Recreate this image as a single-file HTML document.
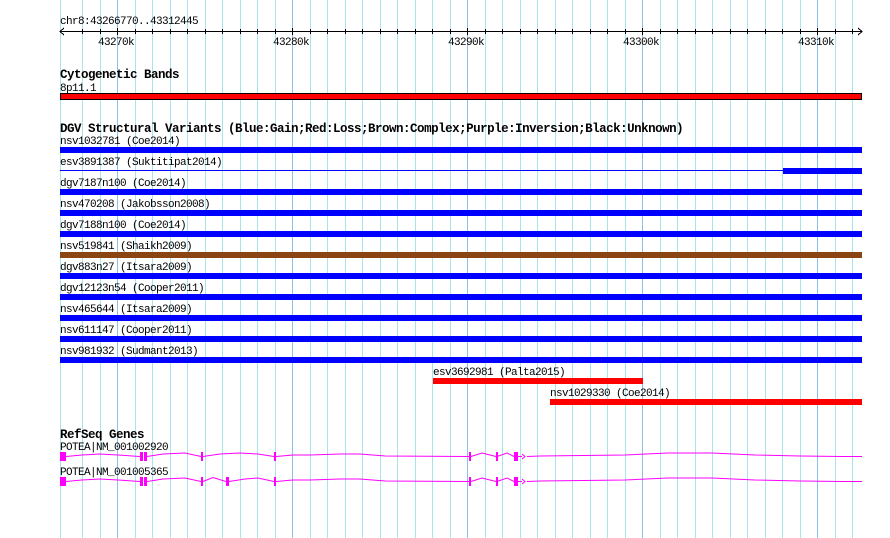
<!DOCTYPE html>
<html><head><meta charset="utf-8"><style>
html,body{margin:0;padding:0;background:#fff}
svg{display:block}
text{font-family:"Liberation Mono","DejaVu Sans Mono",monospace;font-size:11px;letter-spacing:-0.6px;fill:#000}
.b{font-weight:bold;font-size:12.5px;letter-spacing:-0.5px}
</style></head><body>
<svg width="890" height="538" viewBox="0 0 890 538" xmlns="http://www.w3.org/2000/svg" shape-rendering="crispEdges">
<g id="grid" stroke-width="1">
<line x1="60.5" y1="0" x2="60.5" y2="538" stroke="#a8e4ee"/>
<g stroke="#a8e4ee">
<line x1="82.5" y1="0" x2="82.5" y2="538"/><line x1="100.5" y1="0" x2="100.5" y2="538"/>
<line x1="135.5" y1="0" x2="135.5" y2="538"/><line x1="152.5" y1="0" x2="152.5" y2="538"/><line x1="170.5" y1="0" x2="170.5" y2="538"/><line x1="187.5" y1="0" x2="187.5" y2="538"/><line x1="205.5" y1="0" x2="205.5" y2="538"/><line x1="222.5" y1="0" x2="222.5" y2="538"/><line x1="240.5" y1="0" x2="240.5" y2="538"/><line x1="257.5" y1="0" x2="257.5" y2="538"/><line x1="275.5" y1="0" x2="275.5" y2="538"/>
<line x1="310.5" y1="0" x2="310.5" y2="538"/><line x1="327.5" y1="0" x2="327.5" y2="538"/><line x1="345.5" y1="0" x2="345.5" y2="538"/><line x1="362.5" y1="0" x2="362.5" y2="538"/><line x1="380.5" y1="0" x2="380.5" y2="538"/><line x1="397.5" y1="0" x2="397.5" y2="538"/><line x1="415.5" y1="0" x2="415.5" y2="538"/><line x1="432.5" y1="0" x2="432.5" y2="538"/><line x1="450.5" y1="0" x2="450.5" y2="538"/>
<line x1="485.5" y1="0" x2="485.5" y2="538"/><line x1="502.5" y1="0" x2="502.5" y2="538"/><line x1="520.5" y1="0" x2="520.5" y2="538"/><line x1="537.5" y1="0" x2="537.5" y2="538"/><line x1="555.5" y1="0" x2="555.5" y2="538"/><line x1="572.5" y1="0" x2="572.5" y2="538"/><line x1="590.5" y1="0" x2="590.5" y2="538"/><line x1="607.5" y1="0" x2="607.5" y2="538"/><line x1="625.5" y1="0" x2="625.5" y2="538"/>
<line x1="660.5" y1="0" x2="660.5" y2="538"/><line x1="677.5" y1="0" x2="677.5" y2="538"/><line x1="695.5" y1="0" x2="695.5" y2="538"/><line x1="712.5" y1="0" x2="712.5" y2="538"/><line x1="730.5" y1="0" x2="730.5" y2="538"/><line x1="747.5" y1="0" x2="747.5" y2="538"/><line x1="765.5" y1="0" x2="765.5" y2="538"/><line x1="782.5" y1="0" x2="782.5" y2="538"/><line x1="800.5" y1="0" x2="800.5" y2="538"/>
<line x1="835.5" y1="0" x2="835.5" y2="538"/><line x1="852.5" y1="0" x2="852.5" y2="538"/>
</g>
<g stroke="#8cc0ea">
<line x1="117.5" y1="0" x2="117.5" y2="538"/><line x1="292.5" y1="0" x2="292.5" y2="538"/><line x1="467.5" y1="0" x2="467.5" y2="538"/><line x1="642.5" y1="0" x2="642.5" y2="538"/><line x1="817.5" y1="0" x2="817.5" y2="538"/>
</g>
</g>
<!-- ruler -->
<text x="60" y="24">chr8:43266770..43312445</text>
<g stroke="#000">
<line x1="60" y1="31.5" x2="862" y2="31.5"/>
<polyline points="64,28 60,31.5 64,35" fill="none"/>
<polyline points="858,28 862,31.5 858,35" fill="none"/>
<path d="M82.5 29v5M100.5 29v5M117.5 28v7M135.5 29v5M152.5 29v5M170.5 29v5M187.5 29v5M205.5 29v5M222.5 29v5M240.5 29v5M257.5 29v5M275.5 29v5M292.5 28v7M310.5 29v5M327.5 29v5M345.5 29v5M362.5 29v5M380.5 29v5M397.5 29v5M415.5 29v5M432.5 29v5M450.5 29v5M467.5 28v7M485.5 29v5M502.5 29v5M520.5 29v5M537.5 29v5M555.5 29v5M572.5 29v5M590.5 29v5M607.5 29v5M625.5 29v5M642.5 28v7M660.5 29v5M677.5 29v5M695.5 29v5M712.5 29v5M730.5 29v5M747.5 29v5M765.5 29v5M782.5 29v5M800.5 29v5M817.5 28v7M835.5 29v5M852.5 29v5"/>
</g>
<text x="98" y="45">43270k</text><text x="273" y="45">43280k</text><text x="448" y="45">43290k</text><text x="623" y="45">43300k</text><text x="798" y="45">43310k</text>
<!-- cyto -->
<text class="b" x="60" y="78">Cytogenetic Bands</text>
<text x="60" y="91">8p11.1</text>
<rect x="60.5" y="93.5" width="801" height="6" fill="#f00" stroke="#000"/>
<!-- DGV -->
<text class="b" x="60" y="132">DGV Structural Variants (Blue:Gain;Red:Loss;Brown:Complex;Purple:Inversion;Black:Unknown)</text>
<text x="60" y="144">nsv1032781 (Coe2014)</text><rect x="60" y="147" width="802" height="6" fill="#00f"/>
<text x="60" y="165">esv3891387 (Suktitipat2014)</text><rect x="60" y="170" width="723" height="1" fill="#00f"/><rect x="783" y="168" width="79" height="6" fill="#00f"/>
<text x="60" y="186">dgv7187n100 (Coe2014)</text><rect x="60" y="189" width="802" height="6" fill="#00f"/>
<text x="60" y="207">nsv470208 (Jakobsson2008)</text><rect x="60" y="210" width="802" height="6" fill="#00f"/>
<text x="60" y="228">dgv7188n100 (Coe2014)</text><rect x="60" y="231" width="802" height="6" fill="#00f"/>
<text x="60" y="249">nsv519841 (Shaikh2009)</text><rect x="60" y="252" width="802" height="6" fill="#8b4513"/>
<text x="60" y="270">dgv883n27 (Itsara2009)</text><rect x="60" y="273" width="802" height="6" fill="#00f"/>
<text x="60" y="291">dgv12123n54 (Cooper2011)</text><rect x="60" y="294" width="802" height="6" fill="#00f"/>
<text x="60" y="312">nsv465644 (Itsara2009)</text><rect x="60" y="315" width="802" height="6" fill="#00f"/>
<text x="60" y="333">nsv611147 (Cooper2011)</text><rect x="60" y="336" width="802" height="6" fill="#00f"/>
<text x="60" y="354">nsv981932 (Sudmant2013)</text><rect x="60" y="357" width="802" height="6" fill="#00f"/>
<text x="433" y="375">esv3692981 (Palta2015)</text><rect x="433" y="378" width="210" height="6" fill="#f00"/>
<text x="550" y="396">nsv1029330 (Coe2014)</text><rect x="550" y="399" width="312" height="6" fill="#f00"/>
<!-- genes -->
<text class="b" x="60" y="438">RefSeq Genes</text>
<text x="60" y="450">POTEA|NM_001002920</text>
<g fill="none" stroke="#f0f" stroke-width="1" shape-rendering="auto">
<polyline points="66,456.5 82,455 100,454 118,455 140,456.5"/>
<polyline points="147,456.5 163,454 185,453 201,456.5"/>
<polyline points="203,456.5 220,454 240,453 258,454 274,456.5"/>
<polyline points="276,456.5 293,455 310,455 340,454 360,454 385,456 469,456.5"/>
<polyline points="471,456.5 482,453 496,456.5"/>
<polyline points="497,456.5 507,453 514,456.5"/>
<polyline points="518,456.5 522,456.5"/><polyline points="522,454 525,456.5 522,459"/>
<polyline points="527,456.5 540,456 583,455.5 625,455 668,453 712,453 755,455 800,456 842,456.5 862,456.5"/>
</g>
<g fill="#f0f">
<rect x="60" y="452" width="6" height="9"/><rect x="140" y="452" width="3" height="9"/><rect x="144" y="452" width="3" height="9"/>
<rect x="201" y="452" width="2" height="9"/><rect x="274" y="452" width="2" height="9"/>
<rect x="469" y="452" width="2" height="9"/><rect x="496" y="452" width="2" height="9"/><rect x="514" y="452" width="4" height="9"/>
</g>
<text x="60" y="475">POTEA|NM_001005365</text>
<g fill="none" stroke="#f0f" stroke-width="1" shape-rendering="auto">
<polyline points="66,481.5 82,480 100,479 118,480 140,481.5"/>
<polyline points="147,481.5 163,479 185,478 201,481.5"/>
<polyline points="203,481.5 213,477.5 226,481.5"/>
<polyline points="229,481.5 245,479 258,478 274,481.5"/>
<polyline points="276,481.5 293,480 310,480 340,479 360,479 385,481 469,481.5"/>
<polyline points="471,481.5 482,478 496,481.5"/>
<polyline points="497,481.5 507,478 514,481.5"/>
<polyline points="518,481.5 522,481.5"/><polyline points="522,479 525,481.5 522,484"/>
<polyline points="527,481.5 540,481 583,480.5 625,480 668,478 712,478 755,480 800,481 842,481.5 862,481.5"/>
</g>
<g fill="#f0f">
<rect x="60" y="477" width="6" height="9"/><rect x="140" y="477" width="3" height="9"/><rect x="144" y="477" width="3" height="9"/>
<rect x="201" y="477" width="2" height="9"/><rect x="226" y="477" width="3" height="9"/><rect x="274" y="477" width="2" height="9"/>
<rect x="469" y="477" width="2" height="9"/><rect x="496" y="477" width="2" height="9"/><rect x="514" y="477" width="4" height="9"/>
</g>
</svg>
</body></html>
